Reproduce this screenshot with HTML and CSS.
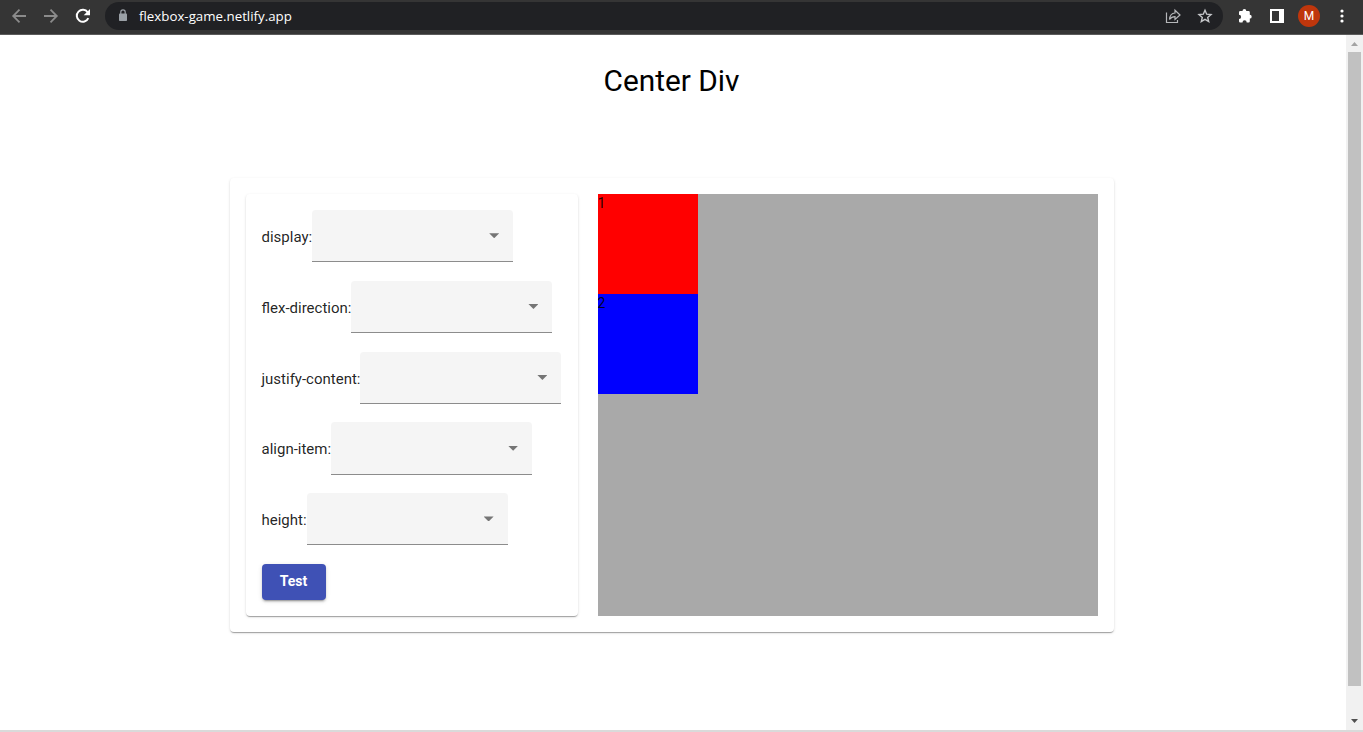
FILE: index.html
```html
<!DOCTYPE html>
<html lang="en">
<head>
<meta charset="utf-8">
<title>Center Div</title>
<link rel="stylesheet" href="styles.css">
</head>
<body>
<header class="toolbar">
  <svg class="icon" width="16" height="16" viewBox="0 0 16 16" fill="none" stroke="#8b8b8b" stroke-width="1.8"><path d="M15 8H2.5M8.5 1.7L2.2 8l6.3 6.3"/></svg>
  <svg class="icon" width="16" height="16" viewBox="0 0 16 16" fill="none" stroke="#8b8b8b" stroke-width="1.8"><path d="M1 8h12.500M7.500 1.700L13.800 8l-6.300 6.300"/></svg>
  <svg class="icon" width="16" height="16" viewBox="0 0 16 16"><path d="M13.300 10.200A6 6 0 1 1 12.700 4.300" fill="none" stroke="#fff" stroke-width="2"/><path d="M15 1v6.300H8.700z" fill="#fff"/></svg>
  <div class="address">
    <svg class="lock" width="10" height="13" viewBox="0 0 10 13"><rect x="1" y="4.500" width="8" height="7.500" rx=".8" fill="#9aa0a6"/><path d="M2.800 5V3a2.200 2.200 0 0 1 4.400 0v2" fill="none" stroke="#9aa0a6" stroke-width="1.200"/></svg>
    <span class="url">flexbox-game.netlify.app</span>
    <svg class="icon" width="16" height="16" viewBox="0 0 16 16" fill="none" stroke="#b5b7ba" stroke-width="1.200"><path d="M1.500 4.500v10h11v-2.500M4.500 11.500c.3-4 2.200-6.300 5.500-6.500V2.200L15 7l-5 4.500V8.700c-2.500 0-4.200.8-5.500 2.800z"/></svg>
    <svg class="icon" width="16" height="16" viewBox="0 0 16 16" fill="none" stroke="#c4c6c9" stroke-width="1.400"><path d="M8 2.200l1.700 4 4.300.4-3.300 2.800 1 4.200L8 11.400l-3.700 2.200 1-4.200L2 6.600l4.300-.4z"/></svg>
  </div>
  <svg class="icon" width="16" height="16" viewBox="0 0 16 16" fill="#fff"><path d="M2 4.200Q2 3 3.200 3H5.500a1.900 1.900 0 0 1 3.800 0h2.300q1.200 0 1.200 1.200v2.600a1.900 1.900 0 0 1 0 3.800v2.600q0 1.200-1.200 1.200H9.700a2.100 2.100 0 0 0-4.200 0H3.200q-1.200 0-1.200-1.200v-2.200a2.100 2.100 0 0 0 0-4.200z"/></svg>
  <svg class="icon" width="16" height="16" viewBox="0 0 16 16"><path d="M1 1h14v14H1zM3 3v10h7V3z" fill="#fff" fill-rule="evenodd"/></svg>
  <span class="avatar">M</span>
  <svg class="menu" width="4" height="14" viewBox="0 0 4 14" fill="#fff"><circle cx="2" cy="2" r="1.600"/><circle cx="2" cy="7" r="1.600"/><circle cx="2" cy="12" r="1.600"/></svg>
</header>
<div class="viewport">
  <main class="page">
    <h1 class="title">Center Div</h1>
    <section class="card game">
      <form class="card controls">
        <div class="field"><label>display:</label><div class="select"><i class="arrow"></i></div></div>
        <div class="field"><label>flex-direction:</label><div class="select"><i class="arrow"></i></div></div>
        <div class="field"><label>justify-content:</label><div class="select"><i class="arrow"></i></div></div>
        <div class="field"><label>align-item:</label><div class="select"><i class="arrow"></i></div></div>
        <div class="field"><label>height:</label><div class="select"><i class="arrow"></i></div></div>
        <button class="test" type="button">Test</button>
      </form>
      <div class="board">
        <div class="box red">1</div>
        <div class="box blue">2</div>
      </div>
    </section>
  </main>
  <div class="scrollbar">
    <svg width="7" height="4" viewBox="0 0 7 4"><path d="M0 4h7L3.500 0z" fill="#a3a3a3"/></svg>
    <div class="thumb"></div>
    <svg width="7" height="4" viewBox="0 0 7 4"><path d="M0 0h7L3.500 4z" fill="#505050"/></svg>
  </div>
</div>
<div class="edge"></div>
</body>
</html>
```
FILE: styles.css
```css
* { box-sizing: border-box; }
body {
  margin: 0;
  height: 732px;
  display: flex;
  flex-direction: column;
  overflow: hidden;
  background: #fff;
  font-family: Roboto, sans-serif;
}
svg { display: block; flex: none; }
.toolbar {
  height: 35px;
  flex: none;
  display: flex;
  align-items: center;
  padding: 0 19px 3px 11px;
  background: #353535;
  border-bottom: 1px solid #5b5b5b;
}
.toolbar > .icon { margin-right: 16px; }
.toolbar > .icon:nth-child(3) { margin-right: 14px; }
.address {
  width: 1118px;
  flex: none;
  height: 28px;
  margin-right: 14px;
  padding: 0 10px 0 13px;
  display: flex;
  align-items: center;
  border-radius: 14px;
  background: #202124;
}
.address .icon + .icon { margin-left: 16px; }
.lock { margin-right: 11px; }
.url {
  flex: 1;
  color: #fff;
  font: 13.3px/18px "Open Sans", sans-serif;
}
.avatar {
  width: 22px;
  flex: none;
  height: 22px;
  margin: 0 19.500px 0 -3px;
  border-radius: 50%;
  background: #bf360c;
  color: #fff;
  font-size: 12px;
  line-height: 22px;
  text-align: center;
}
.viewport { flex: 1; display: flex; }
.page { flex: 1; display: flex; flex-direction: column; align-items: center; padding-right: 3px; }
.title {
  margin: 28px 0 79px;
  font-size: 29.8px;
  font-weight: 400;
  line-height: 36px;
}
.card {
  border-radius: 4px;
  padding: 16px;
  background: #fff;
  box-shadow: 0 2px 1px -1px rgba(0,0,0,.2), 0 1px 1px 0 rgba(0,0,0,.14), 0 1px 3px 0 rgba(0,0,0,.12);
}
.game { width: 884px; height: 454px; display: flex; justify-content: space-between; }
.controls { width: 332px; height: 422px; }
.field {
  height: 70.800px;
  display: flex;
  align-items: flex-start;
  color: rgba(0,0,0,.87);
  font-size: 15px;
  line-height: 54px;
}
.field:nth-child(3) label { margin-right: -.15px; }
.select {
  width: 201px;
  height: 52.200px;
  padding: 23.300px 14px 0 0;
  display: flex;
  justify-content: flex-end;
  border-bottom: 1px solid #8c8c8c;
  border-radius: 4px 4px 0 0;
  background: #f5f5f5;
}
.arrow {
  width: 10px;
  height: 5px;
  background: #757575;
  clip-path: polygon(0 0, 100% 0, 50% 100%);
}
.test {
  display: block;
  width: 64px;
  height: 36px;
  padding: 0 0 1px;
  border: 0;
  border-radius: 4px;
  background: #3f51b5;
  color: #fff;
  font: 700 14px/35px Roboto, sans-serif;
  box-shadow: 0 3px 1px -2px rgba(0,0,0,.2), 0 2px 2px 0 rgba(0,0,0,.14), 0 1px 5px 0 rgba(0,0,0,.12);
}
.board { width: 500px; height: 422px; background: #a9a9a9; }
.box { width: 100px; height: 100px; font-size: 14px; line-height: 18px; color: rgba(0,0,0,.87); }
.red { background: #f00; }
.blue { background: #00f; }
.scrollbar {
  width: 17px;
  padding: 7px 2px;
  display: flex;
  flex-direction: column;
  align-items: center;
  justify-content: space-between;
  background: #f1f1f1;
}
.thumb { width: 13px; height: 634px; margin: 6px 0 auto; background: #c1c1c1; }
.edge { height: 2px; flex: none; background: #dadada; }
```
